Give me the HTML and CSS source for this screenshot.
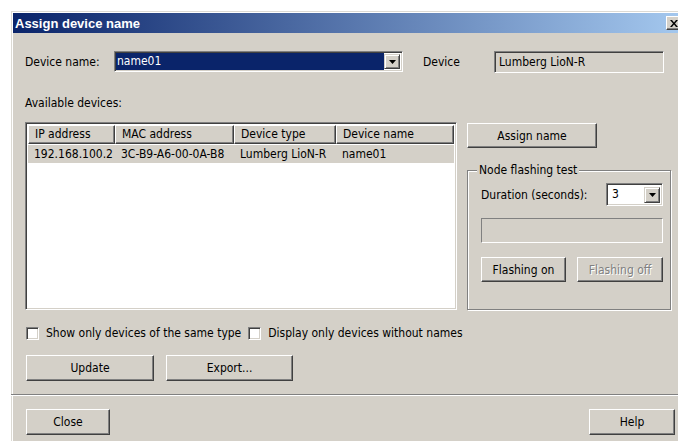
FILE: index.html
```html
<!DOCTYPE html>
<html lang="en">
<head>
<meta charset="utf-8">
<title>Assign device name</title>
<link rel="stylesheet" href="styles.css">
</head>
<body>
<div class="window">
  <div class="titlebar">
    <span class="title">Assign device name</span>
    <span class="caption-btn">
      <svg width="8" height="7" viewBox="0 0 8 7"><path d="M0 0h2l2 2.5L6 0h2L5 3.5 8 7H6L4 4.5 2 7H0l3-3.5z" fill="#000"/></svg>
    </span>
  </div>

  <div class="client">
    <div class="name-row">
      <span class="lbl lbl-name">Device name:</span>
      <div class="combo combo-name">
        <div class="combo-field is-selected">name01</div>
        <div class="drop-btn"><svg width="7" height="4" viewBox="0 0 7 4"><path d="M0 0h7L3.5 4z" fill="#000"/></svg></div>
      </div>
      <span class="lbl lbl-device">Device</span>
      <div class="textbox readonly">Lumberg LioN-R</div>
    </div>

    <div class="avail">Available devices:</div>

    <div class="main">
      <div class="listview">
        <div class="lv-header">
          <div class="lv-col col-ip">IP address</div>
          <div class="lv-col col-mac">MAC address</div>
          <div class="lv-col col-type">Device type</div>
          <div class="lv-col col-name">Device name</div>
        </div>
        <div class="lv-row is-inactive-sel">
          <div class="lv-cell col-ip">192.168.100.2</div>
          <div class="lv-cell col-mac">3C-B9-A6-00-0A-B8</div>
          <div class="lv-cell col-type">Lumberg LioN-R</div>
          <div class="lv-cell col-name">name01</div>
        </div>
      </div>

      <div class="side">
        <button class="btn btn-assign" type="button">Assign name</button>
        <fieldset class="group">
          <legend>Node flashing test</legend>
          <div class="dur-row">
            <span class="lbl">Duration (seconds):</span>
            <div class="combo combo-dur">
              <div class="combo-field">3</div>
              <div class="drop-btn"><svg width="7" height="4" viewBox="0 0 7 4"><path d="M0 0h7L3.5 4z" fill="#000"/></svg></div>
            </div>
          </div>
          <div class="progress"></div>
          <div class="flash-row">
            <button class="btn btn-flash" type="button">Flashing on</button>
            <button class="btn btn-flash" type="button" disabled>Flashing off</button>
          </div>
        </fieldset>
      </div>
    </div>

    <div class="checks">
      <label class="check"><span class="box"></span>Show only devices of the same type</label>
      <label class="check"><span class="box"></span>Display only devices without names</label>
    </div>

    <div class="actions">
      <button class="btn btn-update" type="button">Update</button>
      <button class="btn btn-export" type="button">Export...</button>
    </div>
  </div>

  <div class="separator"></div>

  <div class="footer">
    <button class="btn btn-close" type="button">Close</button>
    <button class="btn btn-help" type="button">Help</button>
  </div>
</div>
</body>
</html>
```

FILE: styles.css
```css
html, body {
  margin: 0;
  padding: 0;
  background: #fff;
}

body {
  width: 678px;
  height: 441px;
  overflow: hidden;
  font-family: "DejaVu Sans Condensed", "DejaVu Sans", "Liberation Sans", sans-serif;
  font-stretch: condensed;
  font-size: 12px;
  color: #000;
}

/* dialog frame */
.window {
  margin: 11px 0 0 11px;
  width: 680px;
  height: 440px;
  padding: 2px 0 0 2px;
  box-sizing: border-box;
  background: #d4d0c8;
  box-shadow: inset 1px 1px 0 #dcdad4, inset 2px 2px 0 #fff;
}

.titlebar {
  height: 20px;
  display: flex;
  align-items: center;
  background: linear-gradient(to right, #0a246a, #a6caf0);
  padding-left: 2px;
}

.title {
  color: #fff;
  font-family: "Liberation Sans", Arial, sans-serif;
  font-weight: bold;
  font-size: 13px;
}

/* close box in the caption */
.caption-btn {
  width: 16px;
  height: 14px;
  margin-left: auto;
  margin-right: 9px;
  display: flex;
  align-items: center;
  justify-content: center;
  background: #d4d0c8;
  box-sizing: border-box;
  border: 1px solid;
  border-color: #fff #404040 #404040 #fff;
  box-shadow: inset -1px -1px 0 #808080;
}

.client {
  padding: 18px 0 0 12px;
}

.lbl {
  white-space: nowrap;
}

/* first row: name combo + device type */
.name-row {
  display: flex;
  align-items: center;
  height: 22px;
}

.lbl-name { width: 89px; }
.lbl-device { width: 71px; margin-left: 20px; }

.combo {
  display: flex;
  box-sizing: border-box;
  border: 1px solid;
  border-color: #808080 #fff #fff #808080;
  box-shadow: inset 1px 1px 0 #404040, inset -1px -1px 0 #d4d0c8;
  background: #fff;
  padding: 2px;
}

.combo-name {
  width: 289px;
  height: 21px;
  align-self: flex-start;
}

.combo-field {
  flex: 1;
  line-height: 15px;
  padding-left: 1px;
  white-space: nowrap;
}

.combo-field.is-selected {
  background: #0a246a;
  color: #fff;
  margin: -1px 0 -1px -1px;
  line-height: 17px;
}

.drop-btn {
  width: 16px;
  display: flex;
  align-items: center;
  justify-content: center;
  box-sizing: border-box;
  background: #d4d0c8;
  border: 1px solid;
  border-color: #d4d0c8 #404040 #404040 #d4d0c8;
  box-shadow: inset 1px 1px 0 #fff, inset -1px -1px 0 #808080;
}

.textbox {
  box-sizing: border-box;
  border: 1px solid;
  border-color: #808080 #fff #fff #808080;
  box-shadow: inset 1px 1px 0 #404040, inset -1px -1px 0 #d4d0c8;
  padding: 0 4px;
  white-space: nowrap;
}

.textbox.readonly {
  width: 170px;
  height: 22px;
  line-height: 20px;
  background: #d4d0c8;
}

.avail {
  margin-top: 22px;
  line-height: 16px;
}

/* device list and side panel */
.main {
  display: flex;
  margin-top: 11px;
}

.listview {
  width: 432px;
  height: 188px;
  box-sizing: border-box;
  background: #fff;
  border: 1px solid;
  border-color: #808080 #fff #fff #808080;
  box-shadow: inset 1px 1px 0 #404040, inset -1px -1px 0 #d4d0c8;
  padding: 2px;
}

.lv-header, .lv-row {
  display: flex;
}

.col-ip { width: 87px; }
.col-mac { width: 119px; }
.col-type { width: 102px; }
.col-name { width: 118px; }

.lv-col {
  box-sizing: border-box;
  height: 19px;
  line-height: 17px;
  padding-left: 6px;
  background: #d4d0c8;
  border: 1px solid;
  border-color: #fff #404040 #404040 #fff;
  box-shadow: inset -1px -1px 0 #808080;
  white-space: nowrap;
}

.lv-row {
  height: 18px;
  line-height: 18px;
  margin-top: 1px;
}

.lv-row.is-inactive-sel {
  background: #d4d0c8;
}

.lv-cell {
  box-sizing: border-box;
  padding-left: 6px;
  white-space: nowrap;
}

.side {
  width: 205px;
  margin-left: 10px;
  display: flex;
  flex-direction: column;
  align-items: flex-start;
}

/* push buttons */
.btn {
  font: inherit;
  color: #000;
  background: #d4d0c8;
  box-sizing: border-box;
  border: 1px solid;
  border-color: #fff #404040 #404040 #fff;
  box-shadow: inset -1px -1px 0 #808080;
  padding: 0;
  margin: 0;
  height: 26px;
  text-align: center;
  white-space: nowrap;
}

.btn:disabled {
  color: #808080;
  text-shadow: 1px 1px 0 #fff;
}

.btn-assign {
  width: 130px;
  height: 25px;
  margin-top: 1px;
}

.group {
  margin: 15px 0 0 0;
  width: 204px;
  height: 147px;
  box-sizing: border-box;
  border: 1px solid #808080;
  box-shadow: inset 1px 1px 0 #fff, 1px 1px 0 #fff;
  padding: 6px 7px 0 13px;
}

.group legend {
  padding: 0 2px;
  margin-left: -4px;
  line-height: 14px;
  background: #d4d0c8;
}

.dur-row {
  display: flex;
  align-items: center;
  justify-content: space-between;
}

.combo-dur {
  width: 57px;
  height: 23px;
  padding: 3px 2px 2px 2px;
}

.combo-dur .combo-field {
  padding-left: 3px;
}

.progress {
  margin-top: 12px;
  height: 25px;
  box-sizing: border-box;
  border: 1px solid;
  border-color: #808080 #fff #fff #808080;
}

.flash-row {
  margin-top: 14px;
  display: flex;
  justify-content: space-between;
}

.btn-flash {
  width: 85px;
  height: 25px;
}

.btn-flash:disabled { width: 86px; }

/* option checkboxes */
.checks {
  margin-top: 16px;
  display: flex;
  align-items: center;
  height: 14px;
}

.check {
  display: flex;
  align-items: center;
  margin-left: 1px;
  white-space: nowrap;
}

.check + .check { margin-left: 7px; }

.box {
  width: 13px;
  height: 13px;
  box-sizing: border-box;
  margin-right: 7px;
  background: #fff;
  border: 1px solid;
  border-color: #808080 #fff #fff #808080;
  box-shadow: inset 1px 1px 0 #404040, inset -1px -1px 0 #d4d0c8;
}

.actions {
  margin-top: 15px;
  display: flex;
  gap: 12px;
  padding-left: 1px;
}

.btn-update { width: 128px; }
.btn-export { width: 127px; }

.separator {
  margin-top: 13px;
  margin-left: -2px;
  height: 1px;
  background: #808080;
  border-bottom: 1px solid #fff;
}

.footer {
  display: flex;
  justify-content: space-between;
  margin-top: 13px;
  padding: 0 16px 0 13px;
}

.btn-close { width: 84px; }
.btn-help { width: 86px; }
```
